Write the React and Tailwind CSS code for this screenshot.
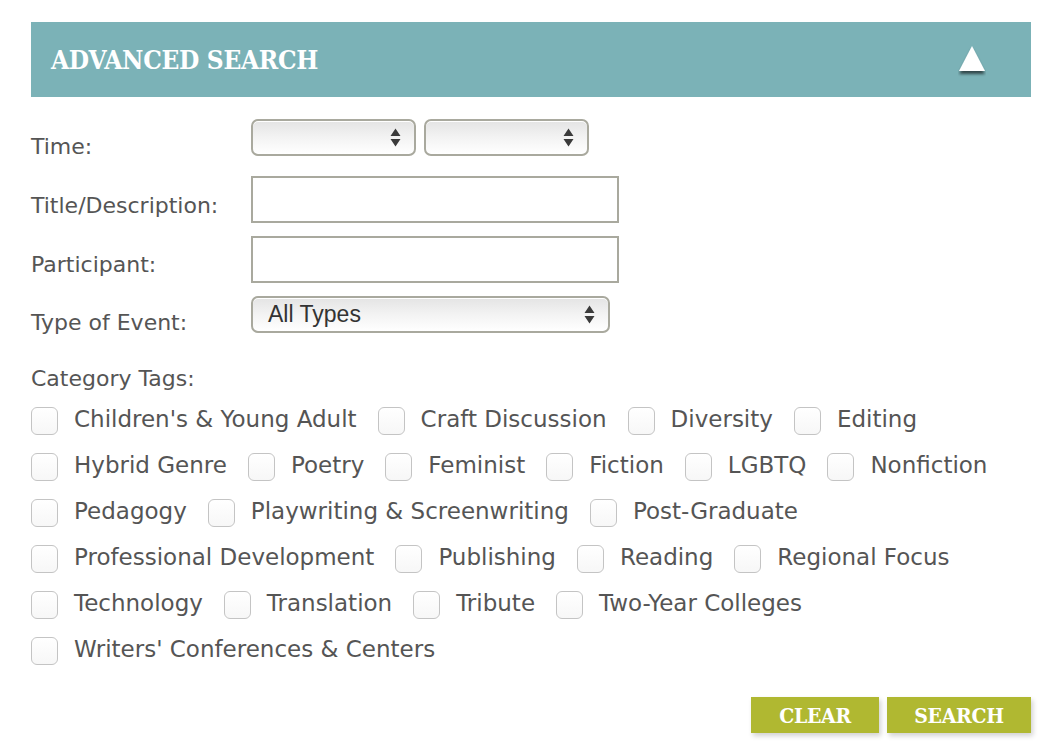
import React from "react";

const Arrows = () => (
  <svg width="11" height="19" viewBox="0 0 11 19">
    <path d="M5.5 0.5 L10.5 8 H0.5 Z M0.5 11 H10.5 L5.5 18.5 Z" fill="#3b3b3b" />
  </svg>
);

const Select = ({ w, children }) => (
  <div
    className={`${w} h-[37px] flex items-center justify-between rounded-[7px] border-2 border-[#a9a99e] bg-gradient-to-b from-[#e4e4e4] via-[#f3f3f3] to-white pl-[15px] pr-[13px] shadow-[inset_0_1px_0_#fff]`}
  >
    <span className="text-[23px] leading-none text-[#333] [font-family:'Liberation_Sans',Arial,sans-serif]">
      {children}
    </span>
    <Arrows />
  </div>
);

const Input = () => (
  <div className="w-[368px] h-[47px] border-2 border-[#a9a99e] bg-white" />
);

const rows = [
  ["Children's & Young Adult", "Craft Discussion", "Diversity", "Editing"],
  ["Hybrid Genre", "Poetry", "Feminist", "Fiction", "LGBTQ", "Nonfiction"],
  ["Pedagogy", "Playwriting & Screenwriting", "Post-Graduate"],
  ["Professional Development", "Publishing", "Reading", "Regional Focus"],
  ["Technology", "Translation", "Tribute", "Two-Year Colleges"],
  ["Writers' Conferences & Centers"],
];

const Check = ({ label }) => (
  <div className="flex items-center h-[28px] mr-[21px]">
    <div className="w-[27px] h-[28px] rounded-[6px] border border-[#c4c4c4] bg-gradient-to-b from-white to-[#f7f7f7]" />
    <span className="ml-[16px] pb-[4px] text-[23px] leading-[24px] text-[#555] whitespace-nowrap">
      {label}
    </span>
  </div>
);

const Label = ({ children, pt }) => (
  <div className={`w-[220px] shrink-0 text-[22px] leading-[26px] text-[#555] ${pt}`}>
    {children}
  </div>
);

const btn =
  "h-[36px] bg-[#b0b831] text-white font-bold text-[21px] leading-none [font-stretch:condensed] tracking-[-0.3px] [font-family:'DejaVu_Serif_Condensed','DejaVu_Serif',serif] shadow-[2px_3px_5px_rgba(0,0,0,0.18)]";

export default function App() {
  return (
    <div className="min-h-[750px] bg-white [font-family:'DejaVu_Sans',sans-serif]">
      <div className="ml-[31px] w-[1000px] pt-[22px]">
        <div className="h-[75px] bg-[#7bb2b7] flex items-center justify-between pl-[20px] pr-[45px]">
          <h1 className="text-white font-bold text-[26px] leading-none [font-stretch:condensed] tracking-[-0.3px] [font-family:'DejaVu_Serif_Condensed','DejaVu_Serif',serif] mt-[1px]">
            ADVANCED SEARCH
          </h1>
          <svg width="28" height="32" viewBox="0 0 28 32" className="mt-[3px]">
            <defs>
              <filter id="sh" x="-50%" y="-50%" width="200%" height="200%">
                <feGaussianBlur in="SourceAlpha" stdDeviation="1.8" />
                <feOffset dx="0" dy="3" />
                <feComponentTransfer>
                  <feFuncA type="linear" slope="0.6" />
                </feComponentTransfer>
                <feMerge>
                  <feMergeNode />
                  <feMergeNode in="SourceGraphic" />
                </feMerge>
              </filter>
            </defs>
            <path d="M14 1 L27 26 H1 Z" fill="#fff" filter="url(#sh)" />
          </svg>
        </div>

        <div className="mt-[22px] h-[37px] flex items-start">
          <Label pt="pt-[15px]">Time:</Label>
          <div className="flex gap-[8px]">
            <Select w="w-[165px]" />
            <Select w="w-[165px]" />
          </div>
        </div>

        <div className="mt-[20px] h-[47px] flex items-start">
          <Label pt="pt-[17px]">Title/Description:</Label>
          <Input />
        </div>

        <div className="mt-[13px] h-[47px] flex items-start">
          <Label pt="pt-[16px]">Participant:</Label>
          <Input />
        </div>

        <div className="mt-[13px] h-[37px] flex items-start">
          <Label pt="pt-[14px]">Type of Event:</Label>
          <Select w="w-[359px]">All Types</Select>
        </div>

        <div className="mt-[33px] text-[22px] leading-[26px] text-[#555]">Category Tags:</div>

        <div className="mt-[15px] flex flex-col gap-[18px]">
          {rows.map((r, i) => (
            <div key={i} className="flex">
              {r.map((l) => (
                <Check key={l} label={l} />
              ))}
            </div>
          ))}
        </div>

        <div className="mt-[32px] flex justify-end gap-[8px]">
          <button className={`w-[128px] ${btn}`}>CLEAR</button>
          <button className={`w-[144px] ${btn}`}>SEARCH</button>
        </div>
      </div>
    </div>
  );
}
